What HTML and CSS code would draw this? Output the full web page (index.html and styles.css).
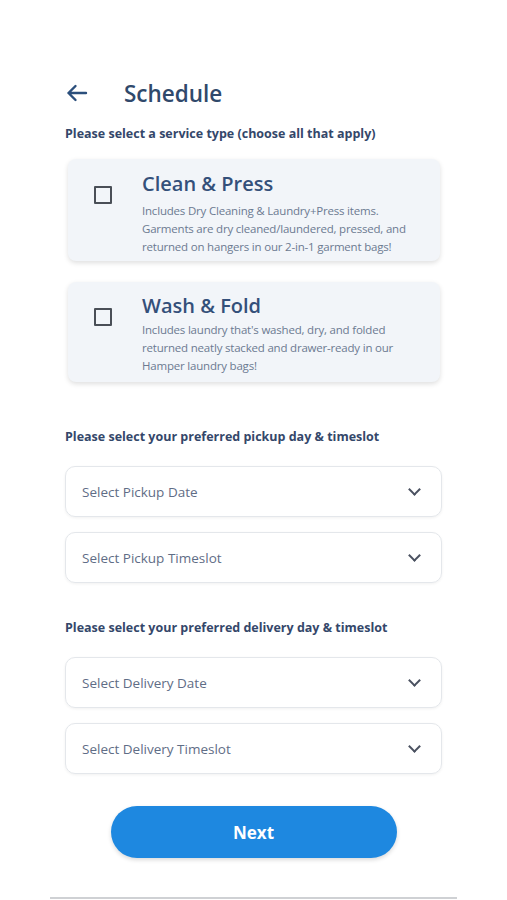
FILE: index.html
```html
<!DOCTYPE html>
<html lang="en">
<head>
  <meta charset="UTF-8">
  <meta name="viewport" content="width=device-width, initial-scale=1.0">
  <title>Schedule</title>
  <link rel="stylesheet" href="styles.css">
</head>
<body>
  <div class="screen">
    <div class="header">
      <svg class="back" width="22" height="18" viewBox="0 0 22 18" fill="none" stroke="#2b4f7c" stroke-width="2.4" stroke-linecap="round" stroke-linejoin="round">
        <path d="M20 9H2.5M9.5 2L2.5 9l7 7"/>
      </svg>
      <h1>Schedule</h1>
    </div>

    <div class="label">Please select a service type (choose all that apply)</div>

    <div class="service">
      <div class="check"></div>
      <div class="service-text">
        <div class="service-title">Clean &amp; Press</div>
        <p>Includes Dry Cleaning &amp; Laundry+Press items. Garments are dry cleaned/laundered, pressed, and returned on hangers in our 2-in-1 garment bags!</p>
      </div>
    </div>

    <div class="service">
      <div class="check"></div>
      <div class="service-text">
        <div class="service-title">Wash &amp; Fold</div>
        <p>Includes laundry that's washed, dry, and folded returned neatly stacked and drawer-ready in our Hamper laundry bags!</p>
      </div>
    </div>

    <div class="label pickup">Please select your preferred pickup day &amp; timeslot</div>
    <div class="select">Select Pickup Date <span class="chev"></span></div>
    <div class="select">Select Pickup Timeslot <span class="chev"></span></div>

    <div class="label delivery">Please select your preferred delivery day &amp; timeslot</div>
    <div class="select">Select Delivery Date <span class="chev"></span></div>
    <div class="select">Select Delivery Timeslot <span class="chev"></span></div>

    <div class="actions">
      <button class="next">Next</button>
    </div>
    <div class="bottom-line"></div>
  </div>
</body>
</html>
```

FILE: styles.css
```css
body {
  margin: 0;
  background: #fff;
  font-family: "Open Sans", "Noto Sans", sans-serif;
  color: #2f4466;
}

.screen {
  width: 507px;
  height: 900px;
  box-sizing: border-box;
  padding: 77px 65px 0 65px;
  overflow: hidden;
}

.header {
  display: flex;
  align-items: center;
  height: 32px;
}

.back {
  margin-left: 1px;
  margin-right: 36px;
}

.header h1 {
  margin: 0;
  font-size: 22.5px;
  font-weight: 600;
  color: #30496b;
}

.label {
  margin-top: 16px;
  font-size: 12.5px;
  font-weight: 700;
  color: #34476a;
}

.label.pickup {
  margin-top: 46px;
}

.label.delivery {
  margin-top: 36px;
}

.service {
  display: flex;
  margin: 17px 2px 0 3px;
  background: #f2f5f9;
  border-radius: 8px;
  box-shadow: 0 2px 5px rgba(0, 0, 0, 0.13);
  padding: 11px 12px 5px 26px;
  height: 86px;
}

.service + .service {
  margin-top: 21px;
  padding-top: 10px;
  height: 85px;
}

.service + .service p {
  margin-top: 1px;
}

.check {
  width: 14px;
  height: 14px;
  border: 2px solid #4a4f57;
  border-radius: 1px;
  margin-top: 16px;
  flex-shrink: 0;
}

.service-text {
  margin-left: 30px;
}

.service-title {
  font-size: 20px;
  font-weight: 600;
  color: #34507a;
  line-height: 28px;
}

.service-text p {
  margin: 4px 0 0 0;
  font-size: 11.5px;
  line-height: 18px;
  color: #6c7a91;
  letter-spacing: -0.2px;
}

.select {
  display: flex;
  align-items: center;
  justify-content: space-between;
  height: 51px;
  box-sizing: border-box;
  margin-top: 15px;
  padding: 0 22px 0 16px;
  border: 1px solid #e4e7eb;
  border-radius: 10px;
  box-shadow: 0 1px 3px rgba(0, 0, 0, 0.06);
  font-size: 13.5px;
  color: #5f6d86;
}

.label + .select {
  margin-top: 21px;
}

.chev {
  width: 7px;
  height: 7px;
  border-right: 2px solid #4a5160;
  border-bottom: 2px solid #4a5160;
  transform: rotate(45deg);
  margin-top: -5px;
}

.actions {
  display: flex;
  justify-content: center;
  margin-top: 32px;
}

.next {
  width: 286px;
  height: 52px;
  border: none;
  border-radius: 26px;
  background: #1e88e0;
  color: #fff;
  font-family: inherit;
  font-size: 17px;
  font-weight: 700;
  box-shadow: 0 2px 4px rgba(0, 0, 0, 0.15);
}

.bottom-line {
  margin: 39px -15px 0 -15px;
  height: 2px;
  background: #cfd1d4;
}
```
